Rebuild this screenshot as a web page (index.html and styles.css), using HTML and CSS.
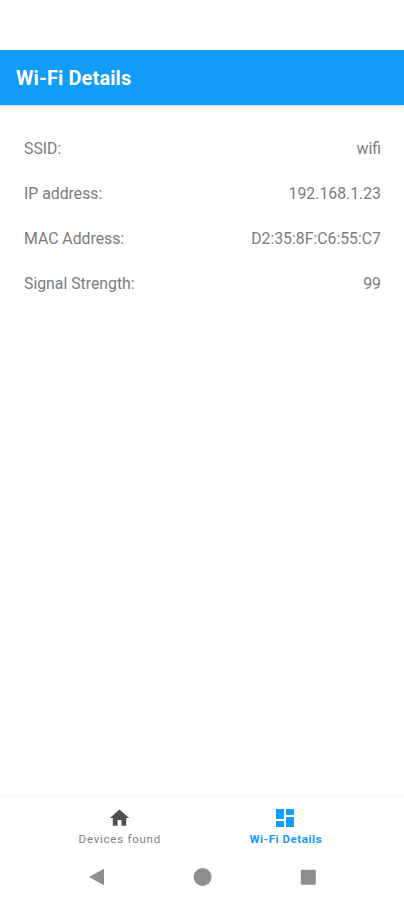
FILE: index.html
```
<!DOCTYPE html>
<html lang="en">
<head>
    <meta charset="UTF-8">
    <meta name="viewport" content="width=device-width, initial-scale=1.0">
    <title>Wi-Fi Details</title>
    <link rel="stylesheet" href="styles.css">
</head>
<body>
    <div class="status-bar"></div>
    <header class="app-bar">
        <h1>Wi-Fi Details</h1>
    </header>

    <main class="details">
        <div class="row"><span>SSID:</span><span>wifi</span></div>
        <div class="row"><span>IP address:</span><span>192.168.1.23</span></div>
        <div class="row"><span>MAC Address:</span><span>D2:35:8F:C6:55:C7</span></div>
        <div class="row"><span>Signal Strength:</span><span>99</span></div>
    </main>

    <nav class="tabs">
        <a class="tab">
            <svg width="23" height="23" viewBox="0 0 24 24"><path d="M10 20v-6h4v6h5v-8h3L12 3 2 12h3v8z"/></svg>
            <span>Devices found</span>
        </a>
        <a class="tab active">
            <svg width="24" height="24" viewBox="0 0 24 24"><path d="M3 13h8V3H3v10zm0 8h8v-6H3v6zm10 0h8V11h-8v10zm0-18v6h8V3h-8z"/></svg>
            <span>Wi-Fi Details</span>
        </a>
    </nav>

    <div class="system-bar">
        <svg width="20" height="20" viewBox="0 0 20 20"><path d="M17 1.8v16.4L2 10z"/></svg>
        <svg width="20" height="20" viewBox="0 0 20 20"><circle cx="9.6" cy="10" r="9"/></svg>
        <svg width="20" height="20" viewBox="0 0 20 20"><rect x="2.8" y="2.7" width="15" height="15" rx="1"/></svg>
    </div>
</body>
</html>
```
FILE: styles.css
```
body {
    display: flex;
    flex-direction: column;
    height: 900px;
    margin: 0;
    background-color: #fff;
    font-family: Roboto, sans-serif;
}
.status-bar {
    height: 50px;
}
.app-bar {
    display: flex;
    align-items: center;
    height: 55px;
    padding: 0 16px;
    background-color: #0f9df8;
    box-shadow: 0 1px 2px rgba(15, 80, 160, 0.25);
}
.app-bar h1 {
    margin: 1px 0 0;
    color: #fff;
    font-size: 20px;
    font-weight: 700;
    letter-spacing: 0.1px;
}
.details {
    flex: 1;
    padding: 21px 23px 0 24px;
}
.row {
    display: flex;
    align-items: center;
    justify-content: space-between;
    height: 45px;
    color: #7c7c7c;
    font-size: 15.8px;
}
.tabs {
    display: flex;
    justify-content: center;
    height: 55px;
    border-top: 1px solid #f7f7f7;
}
.tab {
    display: flex;
    flex-direction: column;
    align-items: center;
    box-sizing: border-box;
    width: 166px;
    padding-top: 9px;
    color: #808080;
    font-size: 11.5px;
    line-height: 18px;
    letter-spacing: 0.75px;
}
.tab svg {
    height: 24px;
    fill: #505050;
}
.tab span {
    padding-left: 1.5px;
}
.tab.active {
    color: #0f9df8;
    font-weight: 700;
    letter-spacing: 0.55px;
}
.tab.active svg {
    fill: #0f9df8;
}
.system-bar {
    display: flex;
    align-items: center;
    justify-content: space-between;
    height: 46px;
    padding: 2px 86px 0 87px;
}
.system-bar svg {
    fill: #8e8e8e;
}
```
